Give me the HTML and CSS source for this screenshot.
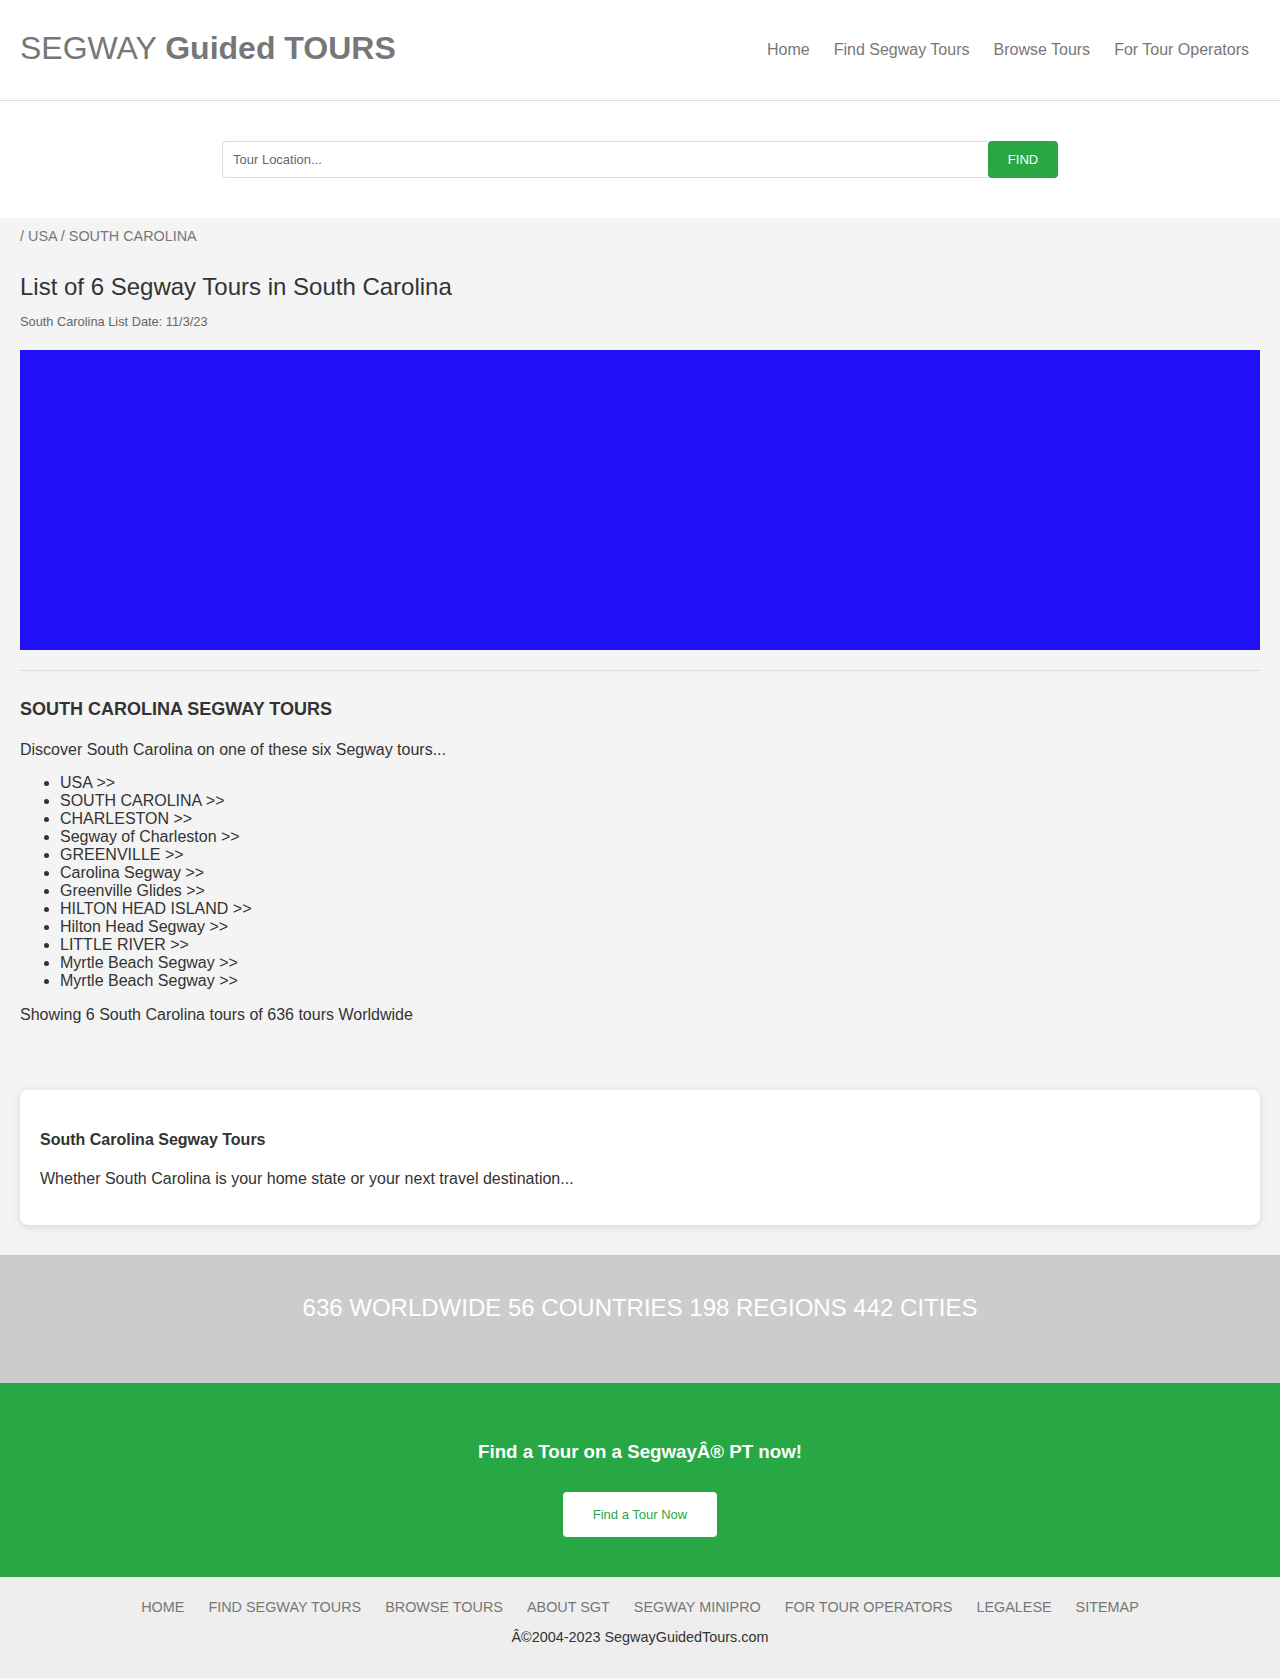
FILE: index.html
```html
<!DOCTYPE html>
<html lang="en">
<head>
<meta charset="utf-8">
<title>Segway Tours in South Carolina</title>
<link rel="stylesheet" href="styles.css">
</head>
<body>
<header class="site-header">
  <div class="logo">SEGWAY <b>Guided TOURS</b></div>
  <nav class="main-nav">
    <a href="#">Home</a>
    <a href="#">Find Segway Tours</a>
    <a href="#">Browse Tours</a>
    <a href="#">For Tour Operators</a>
  </nav>
</header>
<section class="search">
  <form class="search-form">
    <input class="search-input" type="text" placeholder="Tour Location...">
    <button class="search-btn" type="button">FIND</button>
  </form>
</section>
<main class="content">
  <div class="breadcrumb">/ USA / SOUTH CAROLINA</div>
  <h1 class="page-title">List of 6 Segway Tours in South Carolina</h1>
  <div class="list-date">South Carolina List Date: 11/3/23</div>
  <div class="map"></div>
  <hr class="divider">
  <h2 class="section-title">SOUTH CAROLINA SEGWAY TOURS</h2>
  <p class="intro">Discover South Carolina on one of these six Segway tours...</p>
  <ul class="tour-list">
    <li>USA &gt;&gt;</li>
    <li>SOUTH CAROLINA &gt;&gt;</li>
    <li>CHARLESTON &gt;&gt;</li>
    <li>Segway of Charleston &gt;&gt;</li>
    <li>GREENVILLE &gt;&gt;</li>
    <li>Carolina Segway &gt;&gt;</li>
    <li>Greenville Glides &gt;&gt;</li>
    <li>HILTON HEAD ISLAND &gt;&gt;</li>
    <li>Hilton Head Segway &gt;&gt;</li>
    <li>LITTLE RIVER &gt;&gt;</li>
    <li>Myrtle Beach Segway &gt;&gt;</li>
    <li>Myrtle Beach Segway &gt;&gt;</li>
  </ul>
  <p class="showing">Showing 6 South Carolina tours of 636 tours Worldwide</p>
  <div class="card">
    <h3 class="card-title">South Carolina Segway Tours</h3>
    <p class="card-text">Whether South Carolina is your home state or your next travel destination...</p>
  </div>
</main>
<section class="stats">636 WORLDWIDE 56 COUNTRIES 198 REGIONS 442 CITIES</section>
<section class="cta">
  <h2 class="cta-title">Find a Tour on a SegwayÂ® PT now!</h2>
  <a class="cta-btn" href="#">Find a Tour Now</a>
</section>
<footer class="site-footer">
  <nav class="footer-nav">
    <a href="#">HOME</a>
    <a href="#">FIND SEGWAY TOURS</a>
    <a href="#">BROWSE TOURS</a>
    <a href="#">ABOUT SGT</a>
    <a href="#">SEGWAY MINIPRO</a>
    <a href="#">FOR TOUR OPERATORS</a>
    <a href="#">LEGALESE</a>
    <a href="#">SITEMAP</a>
  </nav>
  <div class="copyright">Â©2004-2023 SegwayGuidedTours.com</div>
</footer>
</body>
</html>
```
FILE: styles.css
```css
* { box-sizing: border-box; }
body {
  margin: 0;
  font-family: "Liberation Sans", Arial, sans-serif;
  background: #f4f4f4;
  color: #333;
}
a { text-decoration: none; }

.site-header {
  height: 101px;
  background: #fff;
  border-bottom: 1px solid #ddd;
  display: flex;
  align-items: center;
  justify-content: space-between;
  padding: 0 31px 0 20px;
}
.logo {
  font-size: 32px;
  color: #777;
  line-height: 36px;
  margin-top: -4px;
}
.logo b { font-weight: bold; }
.main-nav {
  display: flex;
  gap: 24px;
  margin-top: 0;
}
.main-nav a {
  color: #777;
  font-size: 16px;
  line-height: 18px;
}

.search {
  background: #fff;
  padding: 40px 0 40px;
  display: flex;
  justify-content: center;
}
.search-form {
  display: flex;
  width: 836px;
  margin: 0;
}
.search-input {
  flex: 1;
  height: 37px;
  border: 1px solid #ddd;
  border-right: none;
  border-radius: 4px 0 0 4px;
  padding: 0 10px;
  font-family: "Liberation Sans", Arial, sans-serif;
  font-size: 13px;
  color: #333;
  outline: none;
}
.search-input::placeholder { color: #666; }
.search-btn {
  width: 70px;
  height: 37px;
  border: none;
  border-radius: 4px;
  background: #28a745;
  color: #fff;
  font-family: "Liberation Sans", Arial, sans-serif;
  font-size: 13px;
  padding: 0;
}

.content {
  padding: 0 20px;
}
.breadcrumb {
  margin-top: 9px;
  font-size: 14.4px;
  line-height: 18px;
  color: #777;
}
.page-title {
  margin: 28px 0 0;
  font-size: 24px;
  line-height: 28px;
  font-weight: normal;
  color: #333;
}
.list-date {
  margin-top: 14px;
  font-size: 12.8px;
  line-height: 14px;
  color: #666;
}
.map {
  margin-top: 21px;
  height: 300px;
  background: #1f10f7;
}
.divider {
  margin: 20px 0 0;
  border: none;
  border-top: 1px solid #ddd;
  height: 0;
}
.section-title {
  margin: 28px 0 0;
  font-size: 18px;
  line-height: 21px;
  font-weight: bold;
  color: #333;
}
.intro {
  margin: 21px 0 0;
  font-size: 16px;
  line-height: 18px;
}
.tour-list {
  margin: 15px 0 0;
  padding-left: 40px;
  font-size: 16px;
  line-height: 18px;
}
.showing {
  margin: 16px 0 0;
  font-size: 16px;
  line-height: 18px;
}
.card {
  margin-top: 66px;
  background: #fff;
  border-radius: 8px;
  box-shadow: 0 2px 8px rgba(0, 0, 0, 0.12);
  padding: 20px 20px 37px;
}
.card-title {
  margin: 21px 0 0;
  font-size: 16px;
  line-height: 18px;
  font-weight: bold;
}
.card-text {
  margin: 21px 0 0;
  font-size: 16px;
  line-height: 18px;
}

.stats {
  margin-top: 30px;
  background: #ccc;
  color: #fff;
  text-align: center;
  font-size: 24px;
  line-height: 28px;
  padding: 39px 0 61px;
}

.cta {
  background: #28a745;
  padding: 58px 0 40px;
  display: flex;
  flex-direction: column;
  align-items: center;
}
.cta-title {
  margin: 0;
  color: #fff;
  font-size: 18.7px;
  line-height: 21px;
  font-weight: bold;
}
.cta-btn {
  margin-top: 30px;
  background: #fff;
  color: #28a745;
  font-size: 13px;
  line-height: 45px;
  height: 45px;
  padding: 0 30px;
  border-radius: 4px;
}

.site-footer {
  background: #eee;
  padding: 22px 0 33px;
  text-align: center;
}
.footer-nav {
  display: flex;
  justify-content: center;
  gap: 24px;
}
.footer-nav a {
  color: #777;
  font-size: 14.4px;
  line-height: 16px;
}
.copyright {
  margin-top: 14px;
  font-size: 14.4px;
  line-height: 16px;
  color: #333;
}
```
